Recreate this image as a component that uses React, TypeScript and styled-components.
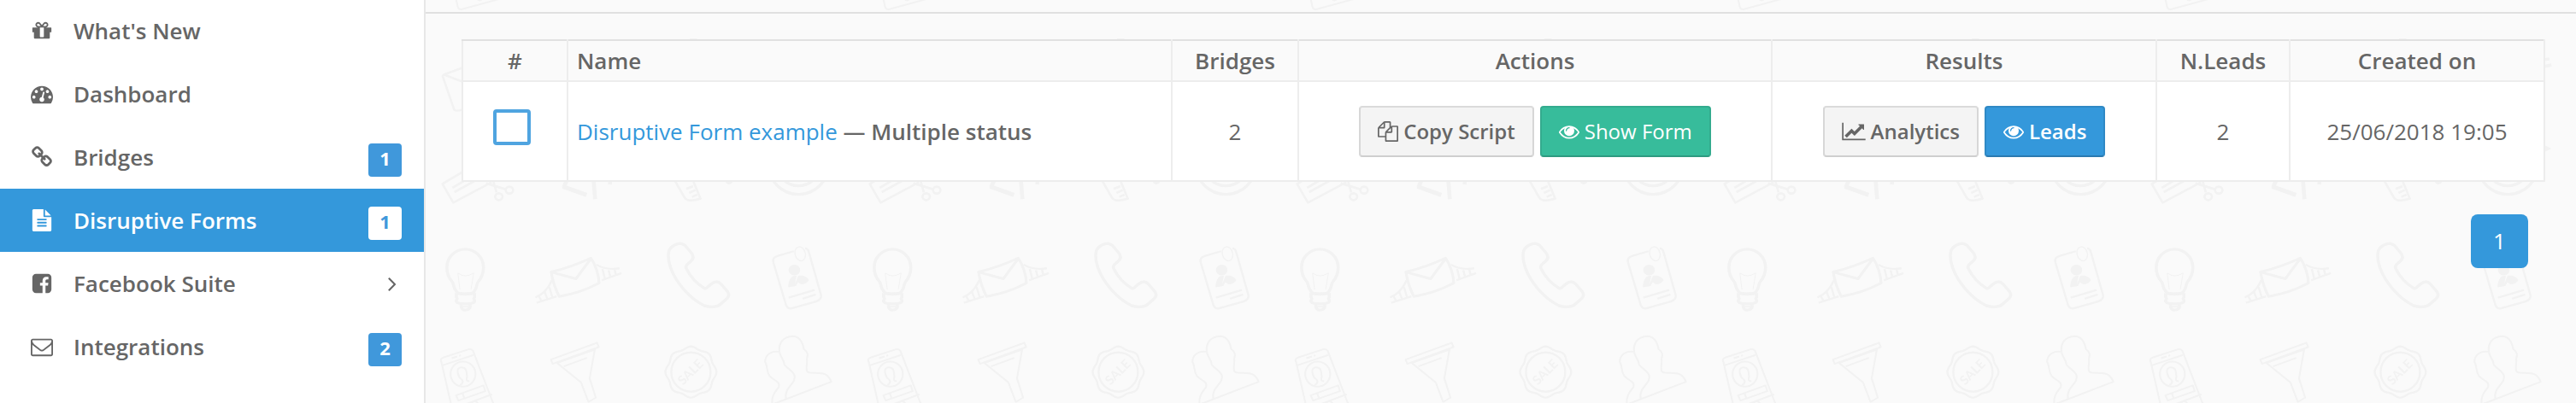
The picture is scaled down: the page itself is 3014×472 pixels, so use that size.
import React from "react";
import styled, { createGlobalStyle, css } from "styled-components";

const GlobalStyle = createGlobalStyle`
  *, *::before, *::after { box-sizing: border-box; }
  body {
    margin: 0;
    background: #fafafa;
    color: #666;
    font-family: "Open Sans", "Liberation Sans", sans-serif;
    font-size: 26px;
    line-height: 36px;
  }
`;

/* ---------- icons ---------- */

const glyphs = {
  gift: "M1056 1356v-716h-320v716q0 25 18 38.5t46 13.5h192q28 0 46-13.5t18-38.5zm-456-844h195l-126-161q-26-31-69-31-40 0-68 28t-28 68 28 68 68 28zm688-96q0-40-28-68t-68-28q-43 0-69 31l-125 161h194q40 0 68-28t28-68zm376 256v320q0 14-9 23t-23 9h-96v416q0 40-28 68t-68 28h-1088q-40 0-68-28t-28-68v-416h-96q-14 0-23-9t-9-23v-320q0-14 9-23t23-9h440q-93 0-158.5-65.5t-65.5-158.5 65.5-158.5 158.5-65.5q107 0 168 77l128 165 128-165q61-77 168-77 93 0 158.5 65.5t65.5 158.5-65.5 158.5-158.5 65.5h440q14 0 23 9t9 23z",
  gauge:
    "M384 1152q0-53-37.5-90.5t-90.5-37.5-90.5 37.5-37.5 90.5 37.5 90.5 90.5 37.5 90.5-37.5 37.5-90.5zm192-448q0-53-37.5-90.5t-90.5-37.5-90.5 37.5-37.5 90.5 37.5 90.5 90.5 37.5 90.5-37.5 37.5-90.5zm428 481l101-382q6-26-7.5-48.5t-38.5-29.5-48 6.5-30 39.5l-101 382q-60 5-107 43.5t-63 98.5q-20 77 20 146t117 89 146-20 89-117q16-60-6-117t-72-91zm660-33q0-53-37.5-90.5t-90.5-37.5-90.5 37.5-37.5 90.5 37.5 90.5 90.5 37.5 90.5-37.5 37.5-90.5zm-640-640q0-53-37.5-90.5t-90.5-37.5-90.5 37.5-37.5 90.5 37.5 90.5 90.5 37.5 90.5-37.5 37.5-90.5zm448 192q0-53-37.5-90.5t-90.5-37.5-90.5 37.5-37.5 90.5 37.5 90.5 90.5 37.5 90.5-37.5 37.5-90.5zm320 448q0 261-141 483-19 29-54 29h-1402q-35 0-54-29-141-221-141-483 0-182 71-348t191-286 286-191 348-71 348 71 286 191 191 286 71 348z",
  chain:
    "M1520 1216q0-40-28-68l-208-208q-28-28-68-28-42 0-72 32 3 3 19 18.5t21.5 21.5 15 19 13 25.5 3.5 27.5q0 40-28 68t-68 28q-15 0-27.5-3.5t-25.5-13-19-15-21.5-21.5-18.5-19q-33 31-33 73 0 40 28 68l206 207q27 27 68 27 40 0 68-26l147-146q28-28 28-67zm-703-705q0-40-28-68l-206-207q-28-28-68-28-39 0-68 27l-147 146q-28 28-28 67 0 40 28 68l208 208q27 27 68 27 42 0 72-31-3-3-19-18.5t-21.5-21.5-15-19-13-25.5-3.5-27.5q0-40 28-68t68-28q15 0 27.5 3.5t25.5 13 19 15 21.5 21.5 18.5 19q33-31 33-73zm895 705q0 120-85 203l-147 146q-83 83-203 83-121 0-204-85l-206-207q-83-83-83-203 0-123 88-209l-88-88q-86 88-208 88-120 0-204-84l-208-208q-84-84-84-204t85-203l147-146q83-83 203-83 121 0 204 85l206 207q83 83 83 203 0 123-88 209l88 88q86-88 208-88 120 0 204 84l208 208q84 84 84 204z",
  file: "M1596 476q14 14 28 36h-472v-472q22 14 36 28zm-476 164h544v1056q0 40-28 68t-68 28h-1344q-40 0-68-28t-28-68v-1600q0-40 28-68t68-28h800v544q0 40 28 68t68 28zm160 736v-64q0-14-9-23t-23-9h-704q-14 0-23 9t-9 23v64q0 14 9 23t23 9h704q14 0 23-9t9-23zm0-256v-64q0-14-9-23t-23-9h-704q-14 0-23 9t-9 23v64q0 14 9 23t23 9h704q14 0 23-9t9-23zm0-256v-64q0-14-9-23t-23-9h-704q-14 0-23 9t-9 23v64q0 14 9 23t23 9h704q14 0 23-9t9-23z",
  facebook:
    "M1376 128q119 0 203.5 84.5t84.5 203.5v960q0 119-84.5 203.5t-203.5 84.5h-188v-595h199l30-232h-229v-148q0-56 23.5-84t91.5-28l122-1v-207q-63-9-178-9-136 0-217.5 80t-81.5 226v171h-200v232h200v595h-532q-119 0-203.5-84.5t-84.5-203.5v-960q0-119 84.5-203.5t203.5-84.5h960z",
  envelope:
    "M1664 1504v-768q-32 36-69 66-268 206-426 338-51 43-83 67t-86.5 48.5-102.5 24.5h-2q-48 0-102.5-24.5t-86.5-48.5-83-67q-158-132-426-338-37-30-69-66v768q0 13 9.5 22.5t22.5 9.5h1472q13 0 22.5-9.5t9.5-22.5zm0-1051v-24.5l-.5-13-3-12.5-5.5-9-9-7.5-14-2.5h-1472q-13 0-22.5 9.5t-9.5 22.5q0 168 147 284 193 152 401 317 6 5 35 29.5t46 37.5 44.5 31.5 50.5 27.5 43 9h2q20 0 43-9t50.5-27.5 44.5-31.5 46-37.5 35-29.5q208-165 401-317 54-43 100.5-115.5t46.5-131.5zm128-37v1088q0 66-47 113t-113 47h-1472q-66 0-113-47t-47-113v-1088q0-66 47-113t113-47h1472q66 0 113 47t47 113z",
  files:
    "M1696 384q40 0 68 28t28 68v1216q0 40-28 68t-68 28h-960q-40 0-68-28t-28-68v-288h-544q-40 0-68-28t-28-68v-672q0-40 20-88t48-76l408-408q28-28 76-48t88-20h416q40 0 68 28t28 68v328q68-40 128-40h416zm-544 213l-299 299h299v-299zm-640-384l-299 299h299v-299zm196 647l316-316v-416h-384v416q0 40-28 68t-68 28h-416v640h512v-256q0-40 20-88t48-76zm956 804v-1152h-384v416q0 40-28 68t-68 28h-416v640h896z",
  eye: "M1664 960q-152-236-381-353 61 104 61 225 0 185-131.5 316.5t-316.5 131.5-316.5-131.5-131.5-316.5q0-121 61-225-229 117-381 353 133 205 333.5 326.5t434.5 121.5 434.5-121.5 333.5-326.5zm-720-384q0-20-14-34t-34-14q-125 0-214.5 89.5t-89.5 214.5q0 20 14 34t34 14 34-14 14-34q0-86 61-147t147-61q20 0 34-14t14-34zm848 384q0 34-20 69-140 230-376.5 368.5t-499.5 138.5-499.5-139-376.5-368q-20-35-20-69t20-69q140-229 376.5-368t499.5-139 499.5 139 376.5 368q20 35 20 69z",
  chart:
    "M2048 1536v128h-2048v-1536h128v1408h1920zm-128-1248v435q0 21-19.5 29.5t-35.5-7.5l-121-121-633 633q-10 10-23 10t-23-10l-233-233-416 416-192-192 585-585q10-10 23-10t23 10l233 233 464-464-121-121q-16-16-7.5-35.5t29.5-19.5h435q14 0 23 9t9 23z",
};

type GlyphName = keyof typeof glyphs;

const GlyphSvg = styled.svg`
  display: block;
  flex: none;
  fill: currentColor;
`;

function Glyph({ name, size }: { name: GlyphName; size: number }) {
  const wide = name === "chart";
  return (
    <GlyphSvg
      aria-hidden="true"
      width={wide ? size + 4 : size}
      height={size}
      viewBox={wide ? "0 0 2048 1792" : "0 0 1792 1792"}
    >
      <path d={glyphs[name]} />
    </GlyphSvg>
  );
}

function Chevron() {
  return (
    <GlyphSvg aria-hidden="true" width="18" height="28" viewBox="448 0 1152 1792">
      <path d="M1171 960q0 13-10 23l-466 466q-10 10-23 10t-23-10l-50-50q-10-10-10-23t10-23l393-393-393-393q-10-10-10-23t10-23l50-50q10-10 23-10t23 10l466 466q10 10 10 23z" />
    </GlyphSvg>
  );
}

/* ---------- doodle wallpaper ---------- */

const Wallpaper = styled.svg`
  position: absolute;
  inset: 0;
  width: 100%;
  height: 100%;
  z-index: -1;
`;

const sealOutline =
  Array.from({ length: 96 }, (_, i) => {
    const a = (i / 96) * Math.PI * 2;
    const r = 28.6 + 1.3 * Math.cos(8 * a);
    return `${i ? "L" : "M"}${(310.4 + r * Math.cos(a)).toFixed(2)} ${(435.7 + r * Math.sin(a)).toFixed(2)}`;
  }).join("") + "Z";

function Smartphone() {
  return (
    <g strokeWidth="6">
      <path d="M74 612Q68 602 80 597L163 568Q174 565 178 574L268 825Q270 835 262 838L142 873Q132 876 128 866Z" />
      <path d="M76 625L180 588M108 599L126 593M132 591L138 589M122 730L212 695L218 715L130 748ZM143 722L149 740M112 778L240 726" />
      <ellipse cx="145" cy="655" rx="41" ry="44" />
      <path d="M135 694C150 684 145 676 134 668C120 640 130 628 145 632C160 636 155 650 158 660C160 670 150 678 166 680" />
      <ellipse cx="183" cy="765" rx="12" ry="14" />
      <ellipse cx="200" cy="832" rx="10" ry="10" />
    </g>
  );
}

function Doodles() {
  return (
    <Wallpaper aria-hidden="true">
      <defs>
        <pattern id="doodles" width="500" height="500" patternUnits="userSpaceOnUse">
          <g fill="none" stroke="#f2f2f2" strokeLinejoin="round">
            <g transform="translate(-1 0) scale(.3333)" strokeWidth="8">
              <path d="M160 228L68 262Q60 266 65 274L103 385Q107 395 160 378M66 262L160 298" />
              <path d="M1400 215L1458 207M1400 242L1465 228" strokeWidth="11" />
              <path d="M1430 505L1465 522L1430 539Z" fill="#f2f2f2" stroke="none" />
              <path d="M930 137h26" strokeWidth="4" />
              <path d="M160 588L62 646L100 712L235 640M97 660L175 614M104 675L200 622" />
              <path d="M252 676L236 620M283 665L215 644" />
              <ellipse cx="260" cy="691" rx="13" ry="12" />
              <ellipse cx="297" cy="668" rx="13" ry="12" />
              <path d="M484 655L568 685" strokeWidth="15" />
              <path d="M502 625L488 658M592 625L598 700M652 625L650 648" strokeWidth="14" />
              <path d="M875 630L912 694Q920 712 968 698L940 630M918 664L942 654M928 678L950 668M938 692L956 684" />
              <circle cx="1068" cy="634" r="14" fill="#f2f2f2" stroke="none" />
              <circle cx="1312" cy="577" r="106" strokeWidth="10" />
              <circle cx="1312" cy="577" r="76" strokeWidth="10" />
            </g>
            <g transform="translate(-8 220) scale(.357 .333)">
              <g strokeWidth="10">
                <path d="M122 362C112 350 116 338 108 328C95 312 92 300 92 280A60 64 0 0 1 212 280C212 300 209 312 196 328C188 338 192 350 183 362C176 378 128 378 122 362Z" />
                <path d="M123 370V384L126 390L123 396V400Q126 408 152 408Q180 408 183 400V396L180 390L183 384V370M138 412Q140 430 152 430Q168 430 169 412M126 372H180" />
                <path d="M142 418H165" strokeWidth="5" />
              </g>
              <path d="M135 359L128 300Q152 318 180 300L171 357" strokeWidth="3" />
              <path d="M434 296Q500 279 564 247Q588 285 591 335Q530 370 460 382Q440 340 434 296L515 320L564 249" strokeWidth="9" />
              <path
                d="M382 386Q418 370 436 326M386 404L452 382M394 382L402 398M412 366L422 392M428 350L438 386M582 270Q610 290 658 283M600 325L664 300M602 285L610 320M622 290L628 314M642 288L646 306"
                strokeWidth="7"
              />
              <path
                d="M825 212C842 194 862 192 872 202L893 228C905 243 897 254 890 260C876 272 874 276 877 284C888 308 910 336 936 353C942 357 946 350 952 344C968 328 980 326 990 338L1012 365C1019 376 1016 384 1008 391L988 410C975 422 950 420 935 414C880 385 840 325 825 280C815 250 816 222 825 212Z"
                strokeWidth="10"
              />
              <g strokeWidth="7">
                <path d="M1229 223L1175 240Q1158 246 1162 262L1203 410Q1208 426 1222 424L1302 400Q1322 392 1318 376L1279 228Q1276 214 1266 212" />
                <ellipse cx="1250" cy="232" rx="17" ry="25" strokeWidth="4" transform="rotate(-12 1250 232)" />
                <circle cx="1231" cy="289" r="19" fill="#f2f2f2" stroke="none" />
                <path
                  d="M1211 350C1210 325 1222 305 1238 310L1232 340L1243 310C1260 305 1275 315 1279 325C1270 338 1256 342 1250 338L1243 332L1236 345Z"
                  fill="#f2f2f2"
                  stroke="none"
                />
                <path d="M1212 386L1297 359M1258 390L1301 375" />
              </g>
              <Smartphone />
              <g strokeWidth="6">
                <path d="M433 604L584 545L590 560L439 619ZM452 615L532 685L556 753L580 738L560 670L577 568M455 615L580 568M475 628L551 598" />
                <path
                  d="M1182 577C1178 545 1195 524 1225 522C1250 522 1258 545 1262 567C1278 580 1275 590 1272 600C1275 615 1265 640 1275 648C1290 655 1325 645 1338 660Q1348 670 1352 682L1158 762M1204 744C1194 700 1240 690 1231 658C1222 640 1202 632 1198 620C1195 600 1185 597 1182 577C1155 570 1135 590 1135 612C1145 630 1138 645 1150 662C1165 680 1185 680 1180 700C1170 715 1155 730 1158 760"
                />
              </g>
            </g>
            <g transform="translate(-8 -280) scale(.357 .333)">
              <Smartphone />
            </g>
            <path d={sealOutline} strokeWidth="2.4" />
            <circle cx="310.4" cy="435.7" r="23" strokeWidth="2.4" />
          </g>
          <text
            x="310"
            y="441"
            fill="#f2f2f2"
            fontFamily="Lato, sans-serif"
            fontSize="15"
            fontWeight="700"
            textAnchor="middle"
            transform="rotate(-45 310 436)"
          >
            SALE
          </text>
        </pattern>
      </defs>
      <rect width="100%" height="100%" fill="url(#doodles)" />
    </Wallpaper>
  );
}

/* ---------- layout ---------- */

const Page = styled.div`
  display: grid;
  grid-template-columns: 498px minmax(0, 1fr);
  min-height: 100vh;
`;

const Sidebar = styled.nav`
  background: #fff;
  border-right: 2px solid #e7e7e7;
  overflow: hidden;
`;

const Menu = styled.ul`
  list-style: none;
  margin: -1px 0 0;
  padding: 0;
`;

const MenuLink = styled.a<{ $active?: boolean }>`
  display: flex;
  align-items: center;
  height: 74px;
  padding: 0 26px 0 36px;
  font-weight: 600;
  text-decoration: none;
  color: ${(p) => (p.$active ? "#fff" : "#666")};
  background: ${(p) => (p.$active ? "#3498db" : "transparent")};
`;

const MenuLabel = styled.span`
  flex: 1;
  margin-left: 24px;
`;

const Badge = styled.span<{ $active?: boolean }>`
  width: 39px;
  height: 39px;
  margin-top: 6px;
  border-radius: 4px;
  font-size: 22px;
  font-weight: 700;
  line-height: 34px;
  text-align: center;
  color: ${(p) => (p.$active ? "#4098db" : "#fff")};
  background: ${(p) => (p.$active ? "#fff" : "#4098db")};
`;

const Main = styled.main`
  position: relative;
  z-index: 0;
`;

const TopBar = styled.div`
  height: 16px;
  border-bottom: 2px solid #e0e0e0;
`;

const Content = styled.div`
  padding: 30px 36px 0 42px;
`;

const FormsTable = styled.table`
  width: 100%;
  table-layout: fixed;
  border-collapse: collapse;
  background: #fff;
`;

const alignment = css<{ $left?: boolean }>`
  text-align: ${(p) => (p.$left ? "left" : "center")};
  padding: 0 10px;
`;

const HeadCell = styled.th<{ $left?: boolean }>`
  ${alignment}
  height: 48px;
  border: 2px solid #ededed;
  border-top-color: #e1e1e1;
  background: #fafafa;
  font-weight: 600;
`;

const Cell = styled.td<{ $left?: boolean }>`
  ${alignment}
  height: 117px;
  border: 2px solid #ededed;
  vertical-align: middle;
`;

const RowCheck = styled.input`
  appearance: none;
  display: block;
  width: 44px;
  height: 42px;
  margin: 0 0 10px 25px;
  border: 4px solid #4fa4e0;
  border-radius: 4px;
  background: #fff;
`;

const FormLink = styled.a`
  color: #3498db;
  text-decoration: none;
`;

const Status = styled.strong`
  font-weight: 600;
`;

const Buttons = styled.div`
  display: flex;
  justify-content: center;
  gap: 7px;
`;

const tones = {
  plain: css`
    color: #666;
    background: #f4f4f4;
    border-color: #dadada #d7d7d7 #cfcfcf;
  `,
  green: css`
    color: #fff;
    background: #37bc9b;
    border-color: #33ab8e #33ab8e #2e9a80;
    font-weight: 400;
  `,
  blue: css`
    color: #fff;
    background: #3498db;
    border-color: #2f89c5 #2f89c5 #2a7ab0;
  `,
};

const ActionButton = styled.button<{ $tone: keyof typeof tones }>`
  display: flex;
  align-items: center;
  gap: 6px;
  height: 60px;
  padding: 0 20px;
  border: 2px solid;
  border-radius: 4px;
  font: 600 24px/34px "Open Sans", "Liberation Sans", sans-serif;
  white-space: nowrap;
  ${(p) => tones[p.$tone]}
`;

const Pagination = styled.nav`
  display: flex;
  justify-content: flex-end;
  padding: 38px 20px 0 0;
`;

const PageLink = styled.a`
  width: 67px;
  height: 63px;
  border-radius: 8px;
  background: #3498db;
  color: #fff;
  line-height: 63px;
  text-align: center;
  text-decoration: none;
`;

/* ---------- data ---------- */

const menu: { icon: GlyphName; label: string; count?: number; active?: boolean; submenu?: boolean }[] = [
  { icon: "gift", label: "What's New" },
  { icon: "gauge", label: "Dashboard" },
  { icon: "chain", label: "Bridges", count: 1 },
  { icon: "file", label: "Disruptive Forms", count: 1, active: true },
  { icon: "facebook", label: "Facebook Suite", submenu: true },
  { icon: "envelope", label: "Integrations", count: 2 },
];

const columns: { title: string; width?: number; left?: boolean }[] = [
  { title: "#", width: 123 },
  { title: "Name", left: true },
  { title: "Bridges", width: 148 },
  { title: "Actions", width: 554 },
  { title: "Results", width: 450 },
  { title: "N.Leads", width: 156 },
  { title: "Created on", width: 298 },
];

const forms = [
  { name: "Disruptive Form example", status: "Multiple status", bridges: 2, leads: 2, created: "25/06/2018 19:05" },
];

export default function App() {
  return (
    <>
      <GlobalStyle />
      <Page>
        <Sidebar aria-label="Main menu">
          <Menu>
            {menu.map((item) => (
              <li key={item.label}>
                <MenuLink href="#" $active={item.active} aria-current={item.active ? "page" : undefined}>
                  <Glyph name={item.icon} size={26} />
                  <MenuLabel>{item.label}</MenuLabel>
                  {item.count !== undefined && <Badge $active={item.active}>{item.count}</Badge>}
                  {item.submenu && <Chevron />}
                </MenuLink>
              </li>
            ))}
          </Menu>
        </Sidebar>
        <Main>
          <Doodles />
          <TopBar />
          <Content>
            <FormsTable>
              <colgroup>
                {columns.map((c) => (
                  <col key={c.title} width={c.width} />
                ))}
              </colgroup>
              <thead>
                <tr>
                  {columns.map((c) => (
                    <HeadCell key={c.title} scope="col" $left={c.left}>
                      {c.title}
                    </HeadCell>
                  ))}
                </tr>
              </thead>
              <tbody>
                {forms.map((f) => (
                  <tr key={f.name}>
                    <Cell>
                      <RowCheck type="checkbox" aria-label={`Select ${f.name}`} />
                    </Cell>
                    <Cell $left>
                      <FormLink href="#">{f.name}</FormLink> <Status>— {f.status}</Status>
                    </Cell>
                    <Cell>{f.bridges}</Cell>
                    <Cell>
                      <Buttons>
                        <ActionButton type="button" $tone="plain">
                          <Glyph name="files" size={24} />
                          Copy Script
                        </ActionButton>
                        <ActionButton type="button" $tone="green">
                          <Glyph name="eye" size={24} />
                          Show Form
                        </ActionButton>
                      </Buttons>
                    </Cell>
                    <Cell>
                      <Buttons>
                        <ActionButton type="button" $tone="plain">
                          <Glyph name="chart" size={24} />
                          Analytics
                        </ActionButton>
                        <ActionButton type="button" $tone="blue">
                          <Glyph name="eye" size={24} />
                          Leads
                        </ActionButton>
                      </Buttons>
                    </Cell>
                    <Cell>{f.leads}</Cell>
                    <Cell>{f.created}</Cell>
                  </tr>
                ))}
              </tbody>
            </FormsTable>
            <Pagination aria-label="Pages">
              <PageLink href="#" aria-current="page">
                1
              </PageLink>
            </Pagination>
          </Content>
        </Main>
      </Page>
    </>
  );
}
